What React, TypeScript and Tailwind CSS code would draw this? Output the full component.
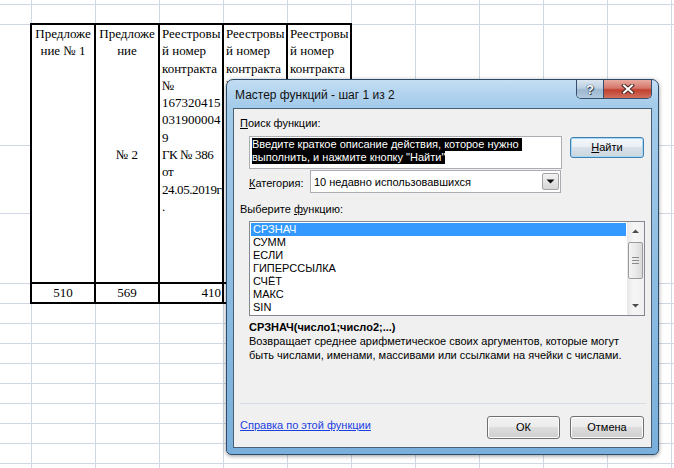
const ui = "font-['Liberation_Sans',Arial,sans-serif]"
const serif = "font-['Liberation_Serif','Times_New_Roman',serif] text-[13px] leading-[17.25px] text-black"

const Lines = ({ lines }: { lines: string[] }) => (
  <>
    {lines.map((l, i) => (
      <div key={i} className="whitespace-nowrap">{l}</div>
    ))}
  </>
)

const DataTable = () => {
  const top = "border-r-2 border-black"
  return (
    <div className={`relative z-10 col-start-2 col-span-5 row-start-3 row-span-4 -mt-[2px] -ml-[2px] -mr-px -mb-px grid grid-cols-[64px_64px_64px_64px_62px] grid-rows-[121px_68px_68px_20px] border-2 border-black bg-white ${serif}`}>
      {/* row 1 */}
      <div className={`${top} text-center`}><Lines lines={['Предложе', 'ние № 1']} /></div>
      <div className={`${top} text-center`}><Lines lines={['Предложе', 'ние']} /></div>
      <div className={`${top} pl-[2px]`}><Lines lines={['Реестровы', 'й номер', 'контракта', '№', '167320415', '031900004', '9']} /></div>
      <div className={`${top} pl-[2px]`}><Lines lines={['Реестровы', 'й номер', 'контракта', '№', '167320415', '031900006', '5']} /></div>
      <div className="pl-[2px]"><Lines lines={['Реестровы', 'й номер', 'контракта', '№']} /></div>
      {/* row 2 */}
      <div className={top} />
      <div className={`${top} text-center`}><Lines lines={['№ 2']} /></div>
      <div className={`${top} pl-[2px] tracking-[-0.4px]`}><Lines lines={['ГК № 386', 'от', '24.05.2019г', '.']} /></div>
      <div className={top} />
      <div />
      {/* row 3 */}
      <div className={top} />
      <div className={top} />
      <div className={top} />
      <div className={top} />
      <div />
      {/* totals */}
      <div className="border-r-2 border-t-2 border-black text-center leading-[18px]">510</div>
      <div className="border-r-2 border-t-2 border-black text-center leading-[18px]">569</div>
      <div className="border-r-2 border-t-2 border-black pr-[1px] text-right leading-[18px]">410</div>
      <div className="border-r-2 border-t-2 border-black" />
      <div className="border-t-2 border-black" />
    </div>
  )
}

const Sheet = () => {
  const blanks = Array.from({ length: 12 * 15 - 20 })
  return (
    <div className="grid w-max grid-cols-[31px_repeat(11,63px)] grid-rows-[4px_19px_120px_67px_69px_19px_repeat(9,19px)] gap-px bg-[#d0d7e5]">
      <DataTable />
      {blanks.map((_, i) => (
        <div key={i} className="bg-white" />
      ))}
    </div>
  )
}

const WinButton = ({ children, w, def }: { children: React.ReactNode; w: string; def?: boolean }) => (
  <div
    className={`flex ${w} items-center justify-center rounded-[3px] border text-[11px] leading-[13px] text-black ${
      def
        ? 'border-[#3c7fb1] bg-[linear-gradient(180deg,#f4f8fb_0%,#e9eef3_50%,#d9e2ea_50%,#cbd5de_100%)] shadow-[inset_0_0_0_1px_#a9d8f5]'
        : 'border-[#707070] bg-[linear-gradient(180deg,#f2f2f2_0%,#ebebeb_50%,#dddddd_50%,#cfcfcf_100%)] shadow-[inset_0_0_0_1px_#fcfcfc]'
    }`}
  >
    {children}
  </div>
)

const TitleButtons = () => (
  <div className="flex h-[19px] overflow-hidden rounded-b-[5px] border border-t-0 border-[#34506e]">
    <div className="flex w-[27px] items-center justify-center border-r border-[#34506e] bg-[linear-gradient(180deg,#dbe6f1_0%,#bccfe1_45%,#9db7cf_55%,#b2cadf_100%)]">
      <span className="text-[13px] font-bold leading-none text-white [text-shadow:0_0_1px_#2a3b4d,0_0_1px_#2a3b4d,1px_1px_0_#3d4f61]">?</span>
    </div>
    <div className="flex w-[47px] items-center justify-center bg-[linear-gradient(180deg,#e8aa9f_0%,#d5766a_45%,#c2402f_55%,#d0705d_100%)]">
      <svg width="14" height="10" viewBox="0 0 14 10">
        <path d="M3 1.5 L11 8.5 M11 1.5 L3 8.5" stroke="#4a2a26" strokeWidth="4" strokeLinecap="square" />
        <path d="M3 1.5 L11 8.5 M11 1.5 L3 8.5" stroke="#ffffff" strokeWidth="2" strokeLinecap="square" />
      </svg>
    </div>
  </div>
)

const ListBox = () => {
  const items = ['СРЗНАЧ', 'СУММ', 'ЕСЛИ', 'ГИПЕРССЫЛКА', 'СЧЁТ', 'МАКС', 'SIN']
  return (
    <div className="ml-[9px] flex h-[95px] w-[396px] border border-[#828790] bg-white">
      <div className="flex-1 p-px">
        {items.map((it, i) => (
          <div key={it} className={`h-[13px] pl-[2px] text-[11px] leading-[13px] ${i === 0 ? 'bg-[#3399ff] text-white' : 'text-black'}`}>
            {it}
          </div>
        ))}
      </div>
      <div className="flex w-[17px] flex-col items-center bg-[linear-gradient(90deg,#e8e8e8,#f6f6f6_40%,#f0f0f0)]">
        <svg width="17" height="17" viewBox="0 0 17 17">
          <path d="M5 11 L8.5 7.5 L12 11 Z" fill="#4d4d4d" />
        </svg>
        <div className="mt-[3px] flex h-[37px] w-[15px] flex-col items-center justify-center gap-[2px] rounded-[2px] border border-[#9b9b9b] bg-[linear-gradient(90deg,#f4f4f4,#e9e9e9_50%,#d9d9d9)]">
          <div className="h-px w-[7px] bg-[#8a8a8a]" />
          <div className="h-px w-[7px] bg-[#8a8a8a]" />
          <div className="h-px w-[7px] bg-[#8a8a8a]" />
        </div>
        <div className="flex-1" />
        <svg width="17" height="17" viewBox="0 0 17 17">
          <path d="M5 6 L8.5 9.5 L12 6 Z" fill="#4d4d4d" />
        </svg>
      </div>
    </div>
  )
}

const Dialog = () => (
  <div
    className={`absolute left-[226px] top-[79px] z-20 flex h-[376px] w-[433px] flex-col rounded-t-[7px] rounded-b-[5px] border border-[#2d4b6a] bg-[linear-gradient(180deg,#c3ddf3_0%,#a3cbea_7%,#8fbde2_50%,#79b0db_100%)] shadow-[0_1px_4px_rgba(0,0,0,0.4)] ${ui}`}
  >
    <div className="flex h-[28px] shrink-0 items-start justify-between pl-[8px] pr-[6px]">
      <div className="pt-[8px] text-[12px] leading-[15px] text-[#111]">Мастер функций - шаг 1 из 2</div>
      <TitleButtons />
    </div>
    <div className="mx-[6px] mb-[6px] flex flex-1 flex-col border border-[#4b5f73] bg-[#f0f0f0] pl-[6px] pr-[7px] pt-[7px] text-[11px] leading-[14px] text-black">
      <div>
        <span className="underline">П</span>оиск функции:
      </div>
      <div className="mt-[6px] flex items-start">
        <div className="ml-[9px] h-[33px] w-[313px] border border-[#abadb3] bg-white px-[2px] py-px leading-[13px]">
          <div>
            <span className="inline-block h-[13px] bg-black text-white">Введите краткое описание действия, которое нужно&nbsp;</span>
          </div>
          <div>
            <span className="inline-block h-[13px] bg-black text-white">выполнить, и нажмите кнопку "Найти"</span>
          </div>
        </div>
        <div className="ml-[8px] mt-px flex h-[21px]">
          <WinButton w="w-[74px]" def>
            <span className="underline">Н</span>айти
          </WinButton>
        </div>
      </div>
      <div className="mt-px flex h-[23px] items-center">
        <div className="ml-[9px] w-[61px] pt-[2px]">
          <span className="underline">К</span>атегория:
        </div>
        <div className="flex h-[23px] w-[251px] items-center border border-[#abadb3] bg-white pl-[3px] pr-px">
          <span className="flex-1">10 недавно использовавшихся</span>
          <div className="flex h-[17px] w-[17px] items-center justify-center rounded-[2px] border border-[#a3a3a3] bg-[linear-gradient(180deg,#f3f3f3,#e4e4e4_50%,#d6d6d6)]">
            <svg width="9" height="5" viewBox="0 0 9 5">
              <path d="M0.5 0.5 L8.5 0.5 L4.5 4.5 Z" fill="#111" />
            </svg>
          </div>
        </div>
      </div>
      <div className="mt-[9px]">
        Выберите <span className="underline">ф</span>ункцию:
      </div>
      <div className="mt-[5px]">
        <ListBox />
      </div>
      <div className="ml-[9px] mt-[4px] font-bold">СРЗНАЧ(число1;число2;...)</div>
      <div className="ml-[9px]">Возвращает среднее арифметическое своих аргументов, которые могут</div>
      <div className="ml-[9px]">быть числами, именами, массивами или ссылками на ячейки с числами.</div>
      <div className="mt-[41px] h-px w-[406px] bg-[#d5dce3]" />
      <div className="mt-[12px] flex h-[23px] items-start">
        <div className="mt-[2px] text-[#1a3ee0] underline">Справка по этой функции</div>
        <div className="ml-auto flex h-[23px] gap-[10px]">
          <WinButton w="w-[73px]">ОК</WinButton>
          <WinButton w="w-[74px]">Отмена</WinButton>
        </div>
      </div>
    </div>
  </div>
)

export default function App() {
  return (
    <div className="relative h-[468px] w-[674px] overflow-hidden bg-white">
      <Sheet />
      <Dialog />
    </div>
  )
}
